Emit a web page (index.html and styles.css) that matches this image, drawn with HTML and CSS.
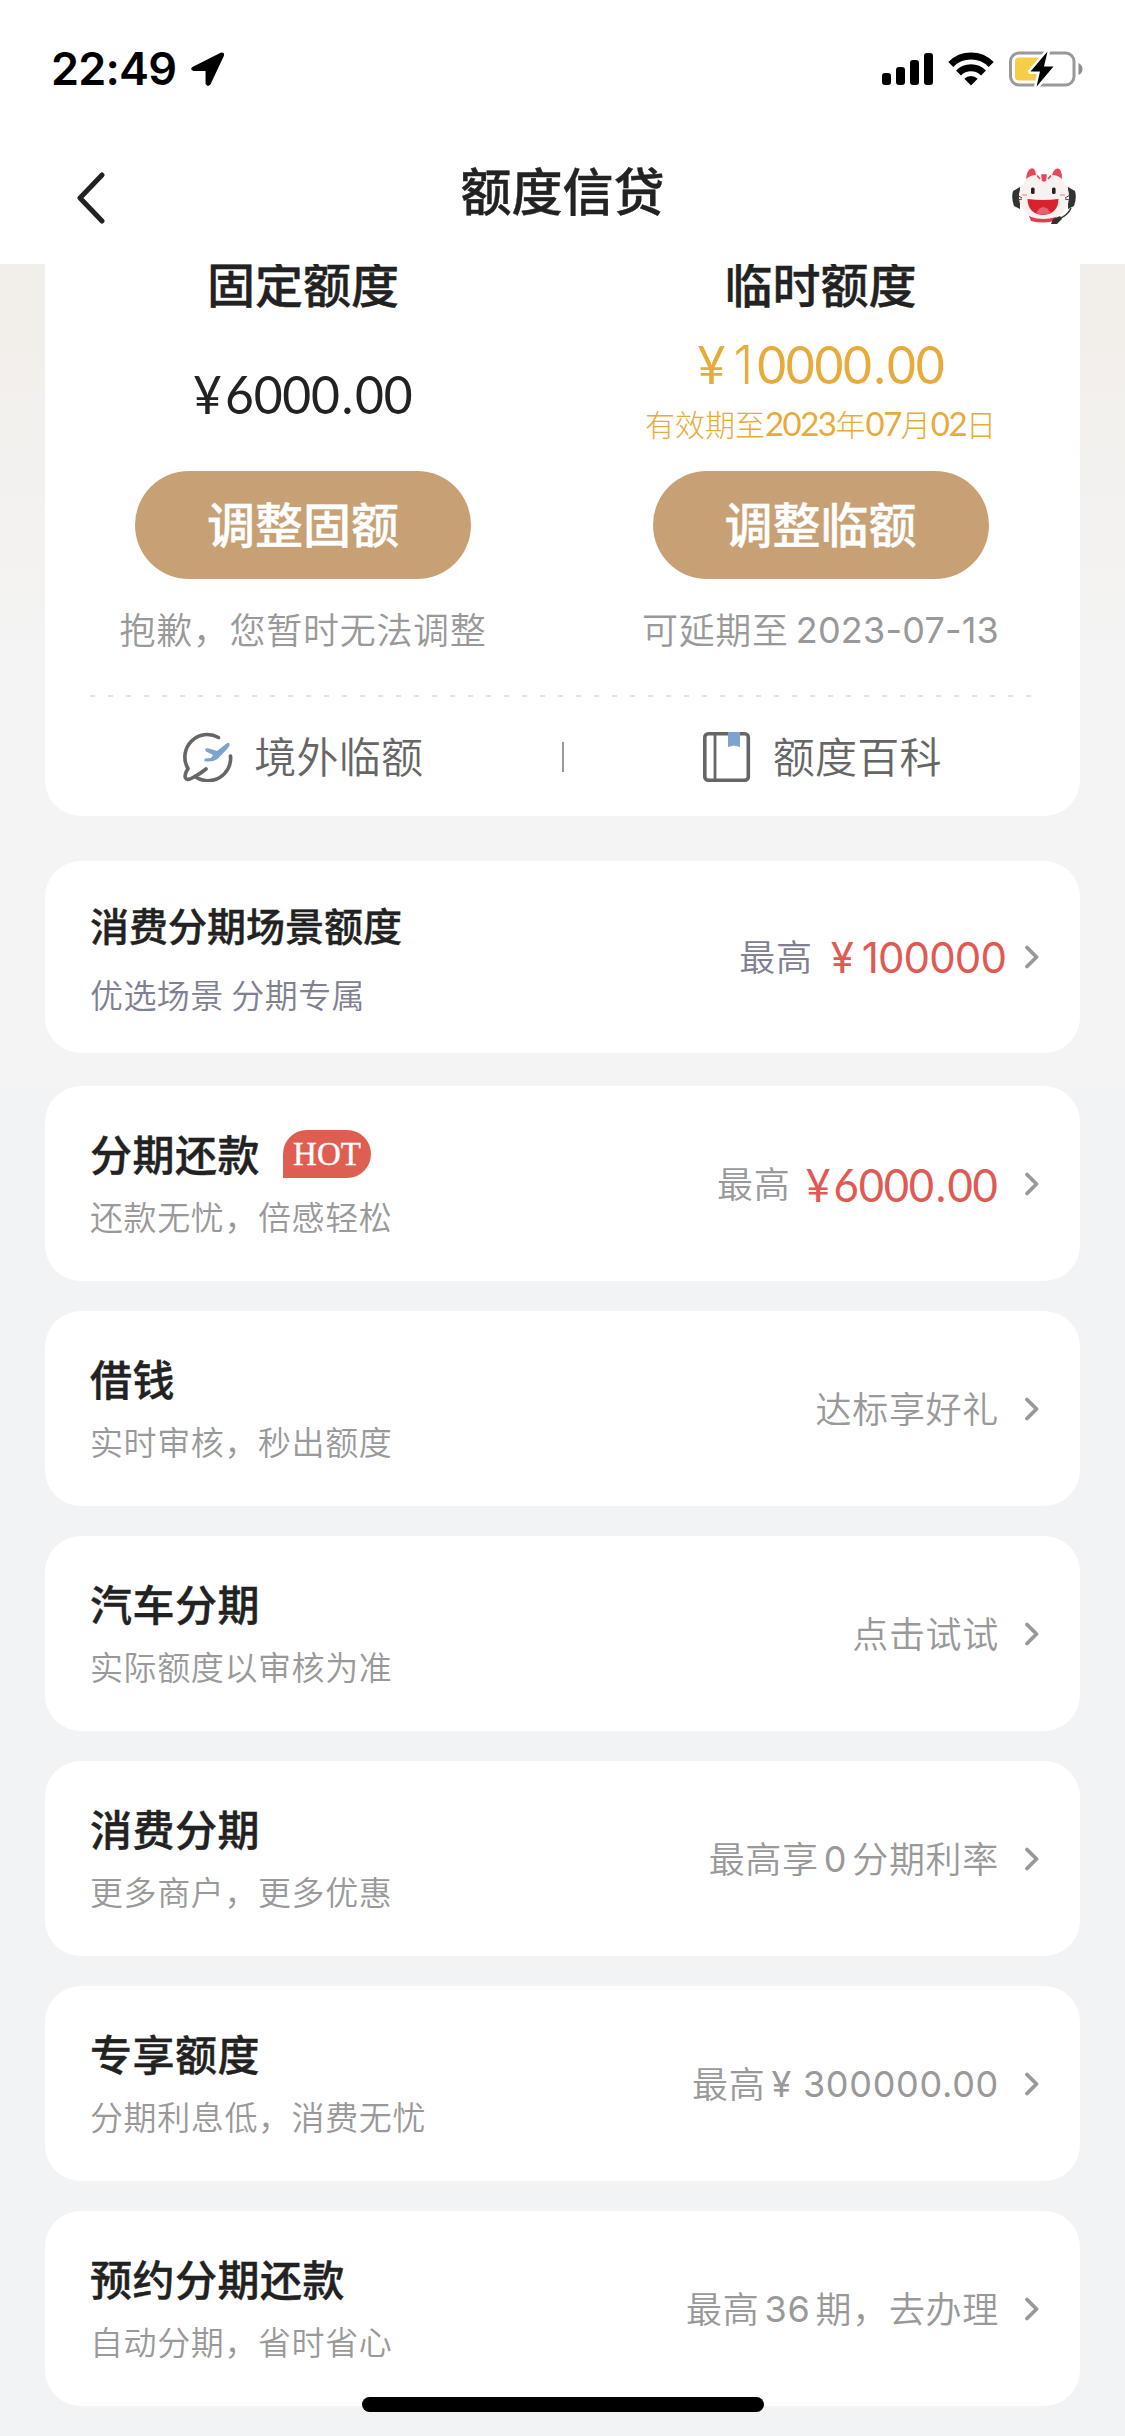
FILE: index.html
```html
<!DOCTYPE html>
<html lang="zh-CN">
<head>
<meta charset="utf-8">
<title>额度信贷</title>
<link rel="stylesheet" href="styles.css">
</head>
<body>
<svg class="defs" width="0" height="0" aria-hidden="true">
  <symbol id="chev" viewBox="0 0 16 24"><path d="M3 2.5 12.5 12 3 21.5" fill="none" stroke="#999" stroke-width="3.8" stroke-linecap="round" stroke-linejoin="round"/></symbol>
</svg>
<header class="header">
  <div class="status">
    <span class="time">22:49</span>
    <svg class="loc" viewBox="0 0 36 36"><path d="M2.500 16 31.500 1.200Q36 0 34.800 4.500L21 34Q18 37 16 33.500V20H3.500Q-.5 18.500 2.500 16Z"/></svg>
    <svg class="signal" viewBox="0 0 51 32"><rect y="20" width="9" height="12" rx="3"/><rect x="14" y="14" width="9" height="18" rx="3"/><rect x="28" y="7" width="9" height="25" rx="3"/><rect x="42" width="9" height="32" rx="3"/></svg>
    <svg class="wifi" viewBox="0 0 46 34"><g fill="none" stroke="#000" stroke-width="7"><path d="M2.800 12.500A28.500 28.500 0 0 1 43.200 12.500"/><path d="M10.500 21A17.700 17.700 0 0 1 35.500 21"/></g><path d="M16.300 26.700A9.500 9.500 0 0 1 29.700 26.700L23 33.500Z"/></svg>
    <svg class="battery" viewBox="0 0 74 36"><rect x="1.500" y="2" width="63.500" height="32" rx="8.500" fill="none" stroke="#999" stroke-width="3"/><path d="M69.500 12Q73.500 14 73.500 18T69.500 24Z" fill="#8c8c8c"/><rect x="6" y="6.500" width="26" height="23" rx="4" fill="#f6ce46"/><path d="M38.500 .5 21.500 20.500H31L27.500 35.800 44.500 15.500H35Z" fill="#000" stroke="#fff" stroke-width="5" stroke-linejoin="round" paint-order="stroke"/></svg>
  </div>
  <div class="nav">
    <svg class="back" viewBox="0 0 28 52"><path d="M25 3 3 26 25 49" fill="none" stroke="#222" stroke-width="5" stroke-linecap="round" stroke-linejoin="round"/></svg>
    <h1>额度信贷</h1>
    <svg class="mascot" viewBox="0 0 64 58">
      <path d="M8 20 1 24Q-1 31 2 39L8 42ZM56 20 63 24Q65 31 62 39L56 42Z" fill="#333"/>
      <path d="M17 49H45L42 54Q31 57 19 54Z" fill="#e23d50"/>
      <path d="M14 13Q14 3 19 1.500T26 8Q32 6 39 8 42 1 46 1.500T50 13Q58 20 57 32T44 50Q31 54 19 50 8 43 7 32T14 13Z" fill="#f7f1f0"/>
      <path d="M14 12Q15 3 19 1.500T24 8Q19 8 14 12ZM40 8Q42 1 46 1.500T50 12Q46 8 40 8Z" fill="#e5475c"/>
      <path d="M30 8H34L33.500 13Q32 15 30.500 13ZM25 8.500 28 12M39 8.500 36 12" fill="#e5475c" stroke="#e5475c" stroke-width="1.500"/>
      <rect x="19" y="20.500" width="3.600" height="6.500" rx="1.500" fill="#222"/><rect x="40" y="20.500" width="3.600" height="6.500" rx="1.500" fill="#222"/>
      <path d="M10 28H15M48 28H53" stroke="#f3b5b5" stroke-width="2"/>
      <path d="M5 28 10 31M5 33 10 32M58 28 53 31M58 33 53 32" stroke="#444" stroke-width="1"/>
      <path d="M15.500 32Q31 34 46.500 32 46 47 31 48 16 47 15.500 32Z" fill="#d8232c"/><path d="M24 46Q31 34 39 46 31 49 24 46Z" fill="#e8606d"/>
      <path d="M59 41Q56 48 47 52" fill="none" stroke="#333" stroke-width="1.500"/><path d="M39 57 41 52 48 49 50 52 45 57Z" fill="#333"/>
    </svg>
  </div>
</header>
<main>
  <section class="limits">
    <div class="cols">
      <div class="col">
        <h2>固定额度</h2>
        <div class="value low"><div class="amount">¥<b>6000</b><i>.</i><b>00</b></div></div>
        <button>调整固额</button>
        <p class="note">抱歉，您暂时无法调整</p>
      </div>
      <div class="col">
        <h2>临时额度</h2>
        <div class="value gold"><div class="amount">¥<b class="one">1</b><b>0000</b><i>.</i><b>00</b></div><p class="expiry">有效期至<i>2023</i>年<i>07</i>月<i>02</i>日</p></div>
        <button>调整临额</button>
        <p class="note">可延期至<span class="num date">2023-07-13</span></p>
      </div>
    </div>
    <div class="dash"></div>
    <div class="links">
      <div class="link">
        <svg viewBox="0 0 50 50"><g fill="none" stroke="#666" stroke-width="3.600" stroke-linecap="round" stroke-linejoin="round"><path d="M35.500 5.500A22.500 22.500 0 0 0 5 36.500Q1 43 2.500 46T10 45.500Q17 42 23 37"/><path d="M47.500 24A22.500 22.500 0 0 1 12 44.500"/></g><path d="M22 17.500Q23 15.500 26 16.500L34 19 43.500 11.500Q46 10 46.500 12 47 14 45 16L34.500 27Q30 30 23 29.500 20 29 22 26.500L28 26 30 23 23 19.500Z" fill="#7fa3cf"/></svg>
        <span>境外临额</span>
      </div>
      <div class="sep"></div>
      <div class="link">
        <svg viewBox="0 0 50 50"><rect x="2.800" y="1.800" width="43.500" height="46.400" rx="3.500" fill="none" stroke="#666" stroke-width="3.600"/><path d="M13 2V48" stroke="#666" stroke-width="2.800"/><path d="M26 0H38V15L32 13.500 26 15Z" fill="#7fa3cf"/></svg>
        <span>额度百科</span>
      </div>
    </div>
  </section>

  <section class="card scene">
    <div class="info"><h3>消费分期场景额度</h3><p>优选场景 分期专属</p></div>
    <div class="side"><span>最高</span><span class="plain">¥<b>100000</b></span></div>
    <svg class="arrow"><use href="#chev"/></svg>
  </section>
  <section class="card">
    <div class="info"><h3>分期还款<em>HOT</em></h3><p>还款无忧，倍感轻松</p></div>
    <div class="side"><span>最高</span><span class="amount money">¥<b>6000</b><i>.</i><b>00</b></span></div>
    <svg class="arrow"><use href="#chev"/></svg>
  </section>
  <section class="card">
    <div class="info"><h3>借钱</h3><p>实时审核，秒出额度</p></div>
    <div class="side"><span>达标享好礼</span></div>
    <svg class="arrow"><use href="#chev"/></svg>
  </section>
  <section class="card">
    <div class="info"><h3>汽车分期</h3><p>实际额度以审核为准</p></div>
    <div class="side"><span>点击试试</span></div>
    <svg class="arrow"><use href="#chev"/></svg>
  </section>
  <section class="card">
    <div class="info"><h3>消费分期</h3><p>更多商户，更多优惠</p></div>
    <div class="side"><span>最高享</span><span class="num mid">0</span><span>分期利率</span></div>
    <svg class="arrow"><use href="#chev"/></svg>
  </section>
  <section class="card">
    <div class="info"><h3>专享额度</h3><p>分期利息低，消费无忧</p></div>
    <div class="side"><span>最高</span><span class="num yuan">¥</span><span class="num">300000.00</span></div>
    <svg class="arrow"><use href="#chev"/></svg>
  </section>
  <section class="card">
    <div class="info"><h3>预约分期还款</h3><p>自动分期，省时省心</p></div>
    <div class="side"><span>最高</span><span class="num mid">36</span><span>期，去办理</span></div>
    <svg class="arrow"><use href="#chev"/></svg>
  </section>
</main>
<div class="home"></div>
</body>
</html>
```
FILE: styles.css
```css
* { box-sizing: border-box; margin: 0; padding: 0; }
body {
  width: 1125px; height: 2436px; overflow: hidden; position: relative;
  display: flex; flex-direction: column;
  font-family: "Noto Sans CJK SC", sans-serif; color: #222; background: #f2f3f5;
}
svg { display: block; flex: none; }
.defs { position: absolute; }
b, i { font-weight: inherit; font-style: normal; }

.header { height: 264px; flex: none; background: #fff; }
.status { height: 138px; display: flex; align-items: center; padding: 0 42px 0 51px; }
.time { font: 600 45px/50px Inter, sans-serif; letter-spacing: -.8px; color: #000; width: 139px; }
.loc { width: 35px; height: 36px; margin-right: auto; }
.signal { width: 51px; height: 32px; }
.wifi { width: 46px; height: 34px; margin: 0 15px; }
.battery { width: 74px; height: 36px; }
.nav { height: 108px; display: flex; align-items: center; justify-content: space-between; padding: 0 49px 0 77px; }
.back { width: 28px; height: 52px; margin: 12px 36px 0 0; }
h1 { font-size: 51px; line-height: 60px; font-weight: 500; margin: -6px 0 0 -28px; }
h1, h2, h3, button { -webkit-text-stroke: .4px; }
.mascot { width: 64px; height: 58px; margin-top: 8px; }

main {
  flex: 1; min-height: 0; overflow: hidden; padding: 0 45px;
  background: linear-gradient(#f2eee9 0, #f4f4f4 406px, #f4f4f4 823px, #f2f3f5 823px);
}
.limits { height: 558px; margin: -6px 0 45px; background: #fff; border-radius: 0 0 36px 36px; }
.cols { display: grid; grid-template-columns: 516px 1fr; }
.col { display: flex; flex-direction: column; align-items: center; }
h2 { font-size: 48px; line-height: 48px; font-weight: 500; }
.value { height: 165px; padding-top: 28px; display: flex; flex-direction: column; align-items: center; }
.value.low { padding-top: 58px; }
.gold { color: #e8aa3a; }
.amount { font: 400 53px/60px Lato, sans-serif; letter-spacing: -.3px; white-space: nowrap; transform: scaleX(.94); }
.amount b:first-of-type { margin-left: .07em; }
.amount i { margin: 0 .04em; }
.amount .one { display: inline-block; width: 30px; font-family: Inter, sans-serif; font-weight: 350; text-align: center; }
.expiry { display: flex; font-size: 30px; line-height: 40px; margin: 8px 0 0; font-weight: 300; }
.expiry i { font-family: Lato, sans-serif; font-size: 33px; font-weight: 400; letter-spacing: -1.500px; }
button {
  width: 336px; height: 108px; border: 0; border-radius: 54px; background: #c7a175; color: #fff; padding-bottom: 5px;
  font: 500 48px/103px "Noto Sans CJK SC", sans-serif;
}
.note { display: flex; font-size: 36px; line-height: 40px; letter-spacing: .7px; margin-top: 29px; font-weight: 350; color: #999; }
.num { font-family: Inter, sans-serif; font-weight: 400; }
.date { margin-left: 7px; padding-top: 2px; letter-spacing: .2px; }
.dash { height: 2px; margin: 45px 45px 0; background: repeating-linear-gradient(90deg, #e2e2e2 0 5px, transparent 5px 18px); }
.links { height: 119px; display: grid; grid-template-columns: 1fr 2px 1fr; align-items: center; }
.link { display: flex; align-items: center; justify-content: center; gap: 21px; font-size: 42px; line-height: 50px; letter-spacing: .3px; font-weight: 350; color: #666; }
.link span { padding-bottom: 4px; }
.link svg { width: 50px; height: 50px; }
.sep { height: 30px; background: #999; }

.card {
  height: 195px; margin-bottom: 30px; padding: 0 40px 0 45px; background: #fff; border-radius: 36px;
  display: flex; align-items: center;
}
.info { margin-right: auto; padding-bottom: 9px; }
h3 { display: flex; align-items: center; font-size: 42px; line-height: 60px; letter-spacing: .5px; font-weight: 500; }
.info p { font-size: 33px; line-height: 40px; letter-spacing: .6px; margin-top: 13px; font-weight: 350; color: #999; }
h3 em {
  width: 88px; height: 48px; margin: 3px 0 0 23px; border-radius: 24px 24px 24px 0; background: #df5e52; color: #fff;
  font: 400 33px/49px "Liberation Serif", serif; letter-spacing: 0; text-align: center; -webkit-text-stroke: .4px;
}
.side { display: flex; align-items: center; font-size: 36px; line-height: 50px; letter-spacing: .7px; font-weight: 350; color: #999; }
.side > span:not([class]) { padding-bottom: 4px; }
.arrow { width: 16px; height: 24px; margin-left: 25px; }
.side .money { color: #e05a53; font-size: 47px; transform: translateX(-1px) scaleX(.93); transform-origin: right; margin-left: 2px; }
.mid { margin: 0 5px; }
.yuan { margin: 0 11px 0 6px; }
.scene { height: 192px; margin-bottom: 33px; }
.scene .info { padding-bottom: 4px; }
.scene h3 { font-size: 39px; letter-spacing: 0; margin-top: -2px; }
.scene .info p { color: #808090; letter-spacing: .4px; margin-top: 20px; }
.scene .side { color: #808090; }
.plain { color: #e05a53; font: 400 42px/50px Inter, sans-serif; letter-spacing: -.9px; margin-left: 18px; padding-top: 2px; }
.plain b { margin-left: 9px; }
.scene .arrow { margin-left: 18px; }

.home { position: absolute; left: 362px; top: 2397px; width: 402px; height: 15px; border-radius: 8px; background: #000; }
```
